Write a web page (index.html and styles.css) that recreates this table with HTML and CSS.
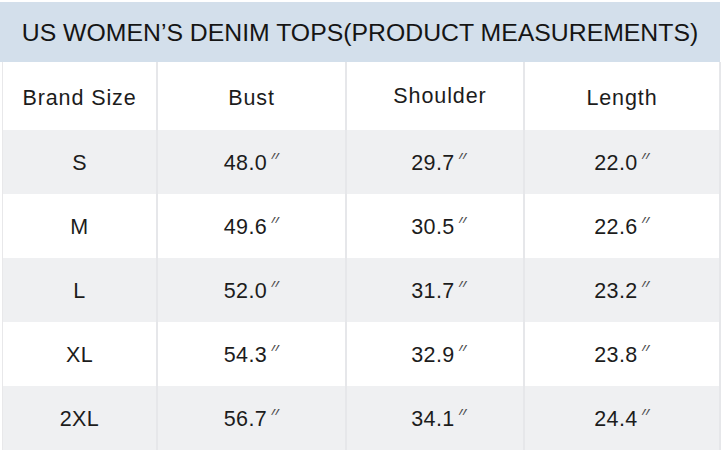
FILE: index.html
```html
<!DOCTYPE html>
<html lang="en">
<head>
<meta charset="utf-8">
<title>US Women's Denim Tops</title>
<link rel="stylesheet" href="styles.css">
</head>
<body>
<div class="chart">
  <div class="title">US WOMEN’S DENIM TOPS(PRODUCT MEASUREMENTS)</div>
  <div class="grid">
    <div class="cell head">Brand Size</div>
    <div class="cell head">Bust</div>
    <div class="cell head up">Shoulder</div>
    <div class="cell head">Length</div>

    <div class="cell alt">S</div>
    <div class="cell alt">48.0<span class="in">″</span></div>
    <div class="cell alt sh">29.7<span class="in">″</span></div>
    <div class="cell alt">22.0<span class="in">″</span></div>

    <div class="cell">M</div>
    <div class="cell">49.6<span class="in">″</span></div>
    <div class="cell sh">30.5<span class="in">″</span></div>
    <div class="cell">22.6<span class="in">″</span></div>

    <div class="cell alt">L</div>
    <div class="cell alt">52.0<span class="in">″</span></div>
    <div class="cell alt sh">31.7<span class="in">″</span></div>
    <div class="cell alt">23.2<span class="in">″</span></div>

    <div class="cell">XL</div>
    <div class="cell">54.3<span class="in">″</span></div>
    <div class="cell sh">32.9<span class="in">″</span></div>
    <div class="cell">23.8<span class="in">″</span></div>

    <div class="cell alt">2XL</div>
    <div class="cell alt">56.7<span class="in">″</span></div>
    <div class="cell alt sh">34.1<span class="in">″</span></div>
    <div class="cell alt">24.4<span class="in">″</span></div>
  </div>
</div>
</body>
</html>
```

FILE: styles.css
```css
html, body {
  margin: 0;
  padding: 0;
  background: #ffffff;
}

body {
  font-family: "Liberation Sans", Arial, sans-serif;
  color: #1c1c1c;
}

.chart {
  width: 720px;
  padding-top: 2px;
}

.title {
  height: 60px;
  background: #d3dfeb;
  display: flex;
  align-items: center;
  justify-content: center;
  font-size: 24.8px;
  color: #151515;
  padding-top: 1px;
  box-sizing: border-box;
}

.grid {
  display: grid;
  grid-template-columns: 155px 189px 178px 196px;
  grid-template-rows: 68px repeat(5, 64px);
  margin-left: 2px;
  border-left: 1px solid #e8e8ea;
  width: 718px;
}

.cell {
  display: flex;
  align-items: center;
  justify-content: center;
  font-size: 21.5px;
  letter-spacing: 0.4px;
  border-right: 2px solid #e6e7ea;
  background: #ffffff;
  padding-top: 2px;
}

.cell.head {
  font-size: 21.5px;
  letter-spacing: 0.9px;
  padding-top: 4px;
}

.cell.head.up {
  padding-top: 0;
  padding-left: 10px;
}

.cell.sh {
  padding-left: 8px;
}

.cell.alt {
  background: #eff0f2;
}

.in {
  font-family: "Noto Sans", sans-serif;
  font-weight: 300;
  font-size: 24px;
  line-height: 1;
  color: #4a4a4a;
  margin-left: 3px;
  letter-spacing: 0;
  position: relative;
  top: -2px;
}
```
